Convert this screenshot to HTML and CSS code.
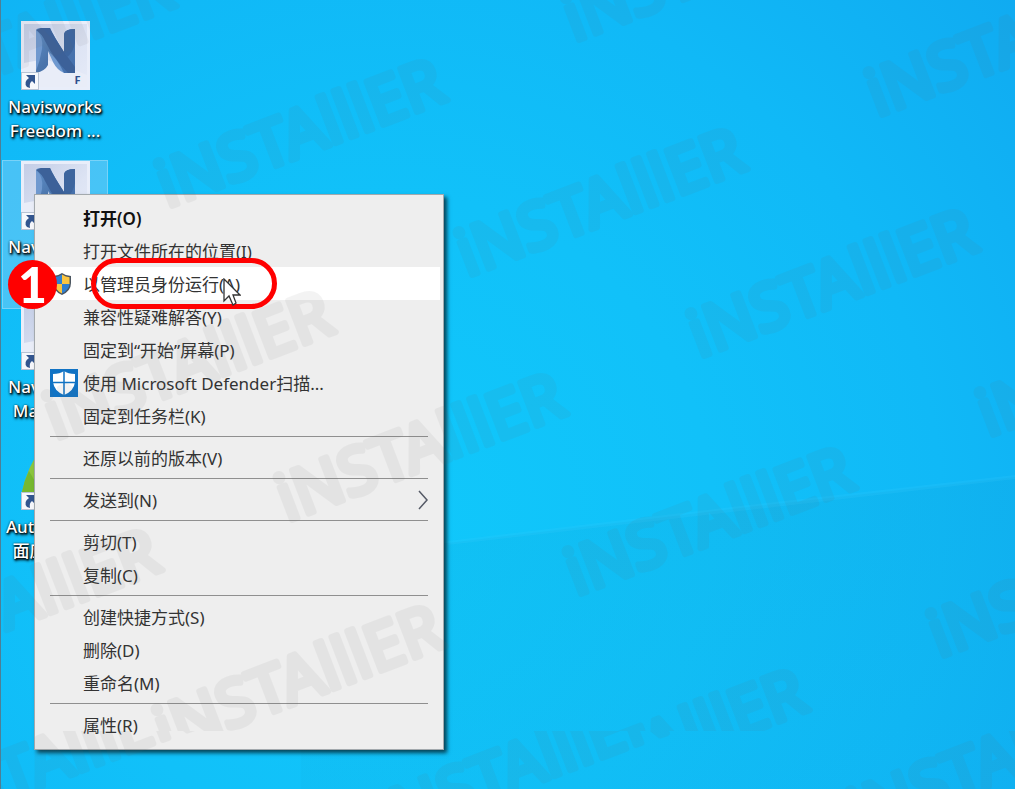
FILE: index.html
```html
<!DOCTYPE html>
<html lang="zh-CN">
<head>
    <meta charset="UTF-8">
    <meta name="viewport" content="width=device-width, initial-scale=1.0">
    <title>以管理员身份运行</title>
    <link rel="stylesheet" href="styles.css">
</head>
<body>
    <!-- 公用图形 -->
    <svg class="defs" width="0" height="0" aria-hidden="true">
        <defs>
            <linearGradient id="tile" x1="0" y1="0" x2="1" y2="1">
                <stop offset="0" stop-color="#c3cde6"/>
                <stop offset=".6" stop-color="#dde4f4"/>
                <stop offset="1" stop-color="#e6ebf8"/>
            </linearGradient>
            <linearGradient id="blue" x1="0" y1="0" x2="1" y2="1">
                <stop offset="0" stop-color="#5f8fc8"/>
                <stop offset=".5" stop-color="#4a74ab"/>
                <stop offset="1" stop-color="#4470ae"/>
            </linearGradient>
            <symbol id="navis" viewBox="0 0 69 69">
                <rect width="69" height="69" fill="#e9eefa"/>
                <rect x="3" y="3" width="63" height="63" fill="url(#tile)"/>
                <path d="M3 42L24 38 66 54V66H3Z" fill="#e9edf8"/>
                <path d="M15 9Q16 7 20 7H29Q32 14 43 31V13Q44 8 54 8V52H43Q36 46 27 30V44Q24 50 15 52Z" fill="url(#blue)"/>
                <path d="M20 7H29Q32 14 43 31L54 46V52H47Q33 38 24 20Q21 13 15 9Z" fill="#3c6199"/>
                <path d="M15 9Q23 16 21 28Q19 40 15 50Z" fill="#7099cf"/>
                <path d="M43 31V13Q44 8 54 8V22Q52 32 46 36Z" fill="#3d659e"/>
                <path d="M27 30Q36 37 43 52Q36 49 32 41Z" fill="#6f99cf"/>
            </symbol>
            <symbol id="shortcut" viewBox="0 0 18 18">
                <rect x=".5" y=".5" width="17" height="17" fill="#f6f8fc" stroke="#b8c3d4"/>
                <path d="M5 3H14V12L11 9Q8 11 9 16L6 15Q2 10 8 6Z" fill="#32558f"/>
            </symbol>
        </defs>
    </svg>

    <main class="desktop">
        <!-- 壁纸上的光线 -->
        <svg class="wallpaper" viewBox="0 0 1015 789" preserveAspectRatio="none" aria-hidden="true">
            <defs>
                <linearGradient id="shade" x1="0" y1="0" x2="0" y2="1">
                    <stop offset="0" stop-color="#1090c0" stop-opacity=".12"/>
                    <stop offset="1" stop-color="#1090c0" stop-opacity=".06"/>
                </linearGradient>
            </defs>
            <path d="M300 552L447 543 740 508 1015 477V789H300Z" fill="url(#shade)"/>
            <path d="M447 541L740 506 1015 475V479L740 511 447 545Z" fill="#40d0ff" fill-opacity=".16"/>
        </svg>

        <div class="icons">
            <a class="shortcut" href="#">
                <span class="picture">
                    <svg width="69" height="69"><use href="#navis"/></svg>
                    <svg class="arrow" width="18" height="18"><use href="#shortcut"/></svg>
                    <span class="letter">F</span>
                </span>
                <span class="name">Navisworks<br>Freedom ...</span>
            </a>
            <a class="shortcut selected" href="#">
                <span class="picture">
                    <svg width="69" height="69"><use href="#navis"/></svg>
                    <svg class="arrow" width="18" height="18"><use href="#shortcut"/></svg>
                </span>
                <span class="name">Navisworks</span>
            </a>
            <a class="shortcut" href="#">
                <span class="picture">
                    <svg width="69" height="69"><use href="#navis"/></svg>
                    <svg class="arrow" width="18" height="18"><use href="#shortcut"/></svg>
                </span>
                <span class="name">Navisworks<br>Manage ...</span>
            </a>
            <a class="shortcut" href="#">
                <span class="picture">
                    <svg width="69" height="69" viewBox="0 0 69 69">
                        <path d="M1 51Q6 26 22 4H44L68 51Z" fill="#8cc63f"/>
                        <path d="M1 51Q3 40 8 30L20 51Z" fill="#76b82f"/>
                    </svg>
                    <svg class="arrow" width="18" height="18"><use href="#shortcut"/></svg>
                </span>
                <span class="name">Autodesk 桌<br>面应用程序</span>
            </a>
        </div>

        <!-- 右键菜单 -->
        <menu class="context-menu">
            <li><button class="item default">打开(O)</button></li>
            <li><button class="item">打开文件所在的位置(I)</button></li>
            <li>
                <button class="item active">
                    <svg class="uac" width="18" height="22" viewBox="0 0 18 22" aria-hidden="true">
                        <path d="M9 0Q13 3 18 3V10Q18 18 9 22Q0 18 0 10V3Q5 3 9 0Z" fill="#4b5560"/>
                        <path d="M9 1.500Q5 4 1.500 4.200V11H9Z" fill="#2f7fd0"/>
                        <path d="M9 1.500Q13 4 16.500 4.200V11H9Z" fill="#fbc540"/>
                        <path d="M1.500 11Q2 17 9 20.500V11Z" fill="#fbc540"/>
                        <path d="M16.500 11Q16 17 9 20.500V11Z" fill="#2f7fd0"/>
                    </svg>
                    以管理员身份运行(A)
                </button>
            </li>
            <li><button class="item">兼容性疑难解答(Y)</button></li>
            <li><button class="item">固定到“开始”屏幕(P)</button></li>
            <li>
                <button class="item">
                    <svg class="defender" width="28" height="28" viewBox="0 0 28 28" aria-hidden="true">
                        <rect width="28" height="28" fill="#1173c4"/>
                        <path d="M14 2Q18 5 25 5V13Q24 22 14 26Q4 22 3 13V5Q10 5 14 2Z" fill="#fff"/>
                        <path d="M14 2V26M3 13.500H25" stroke="#1173c4" stroke-width="1.500"/>
                    </svg>
                    使用 Microsoft Defender扫描...
                </button>
            </li>
            <li><button class="item">固定到任务栏(K)</button></li>
            <li class="separator" role="separator"></li>
            <li><button class="item">还原以前的版本(V)</button></li>
            <li class="separator" role="separator"></li>
            <li>
                <button class="item">
                    发送到(N)
                    <svg class="more" width="12" height="20" viewBox="0 0 12 20" aria-hidden="true">
                        <path d="M2 1L10 10L2 19" fill="none" stroke="#555a66" stroke-width="1.500"/>
                    </svg>
                </button>
            </li>
            <li class="separator" role="separator"></li>
            <li><button class="item">剪切(T)</button></li>
            <li><button class="item">复制(C)</button></li>
            <li class="separator" role="separator"></li>
            <li><button class="item">创建快捷方式(S)</button></li>
            <li><button class="item">删除(D)</button></li>
            <li><button class="item">重命名(M)</button></li>
            <li class="separator" role="separator"></li>
            <li><button class="item">属性(R)</button></li>
        </menu>

        <!-- 水印 -->
        <svg class="watermark" aria-hidden="true">
            <defs>
                <clipPath id="upper"><rect width="100%" height="731"/></clipPath>
                <clipPath id="lower"><rect y="731" width="100%" height="100%"/></clipPath>
            </defs>
            <g clip-path="url(#upper)">
                <text transform="translate(-105 114) rotate(-21)">iNSTAlllER</text>
                <text transform="translate(573 42) rotate(-21)">iNSTAlllER</text>
                <text transform="translate(166 208) rotate(-21)">iNSTAlllER</text>
                <text transform="translate(466 277) rotate(-21)">iNSTAlllER</text>
                <text transform="translate(698 358) rotate(-21)">iNSTAlllER</text>
                <text transform="translate(876 117) rotate(-21)">iNSTAlllER</text>
                <text transform="translate(54 440) rotate(-21)">iNSTAlllER</text>
                <text transform="translate(286 522) rotate(-21)">iNSTAlllER</text>
                <text transform="translate(575 596) rotate(-21)">iNSTAlllER</text>
                <text transform="translate(938 658) rotate(-21)">iNSTAlllER</text>
                <text transform="translate(987 437) rotate(-21)">iNSTAlllER</text>
                <text transform="translate(-119 678) rotate(-21)">iNSTAlllER</text>
                <text transform="translate(164 754) rotate(-21)">iNSTAlllER</text>
                <text transform="translate(528 818) rotate(-21)">iNSTAlllER</text>
            </g>
            <g clip-path="url(#lower)">
                <text transform="translate(-88 836) rotate(-21)">iNSTAlllER</text>
                <text transform="translate(385 841) rotate(-21)">iNSTAlllER</text>
                <text transform="translate(858 836) rotate(-21)">iNSTAlllER</text>
            </g>
        </svg>

        <!-- 步骤标注 -->
        <div class="highlight"></div>
        <span class="step">1</span>
        <svg class="cursor" width="18" height="28" viewBox="0 0 18 28" aria-hidden="true">
            <path d="M1 1V23L6 18L10 27L13 25L10 17H17Z" fill="#fff" stroke="#333" stroke-width="1.300"/>
        </svg>
    </main>
</body>
</html>
```
FILE: styles.css
```css
* {
    box-sizing: border-box;
}
body {
    margin: 0;
    font-family: "Noto Sans", "Noto Sans CJK SC", sans-serif;
    font-size: 17px;
}
.defs {
    position: absolute;
}
.desktop {
    position: relative;
    min-height: 100vh;
    padding: 20px 0 0 1px;
    overflow: hidden;
    background: radial-gradient(circle at 38% 66%, #10c8fb 0%, #11c1f9 40%, #10b9f7 68%, #10abf1 100%);
    border-left: 1px solid #4d7f96;
}
.wallpaper {
    position: absolute;
    top: 0;
    left: 0;
    width: 100%;
    height: 100%;
}

/* 桌面图标 */
.icons {
    position: relative;
    display: flex;
    flex-direction: column;
    width: 106px;
}
.shortcut {
    display: flex;
    flex-direction: column;
    align-items: center;
    height: 140px;
    padding-top: 1px;
    color: white;
    text-align: center;
    text-decoration: none;
}
.shortcut.selected {
    height: 149px;
    margin-bottom: -9px;
    background-color: rgba(140, 205, 245, 0.45);
    box-shadow: inset 0 0 0 1px rgba(170, 225, 250, 0.5);
}
.picture {
    position: relative;
    width: 69px;
    height: 69px;
}
.picture svg {
    display: block;
}
.picture .arrow {
    position: absolute;
    left: 0;
    bottom: 0;
}
.letter {
    position: absolute;
    right: 9px;
    bottom: 4px;
    color: #2f4f8c;
    font-size: 11px;
    font-weight: bold;
    line-height: 12px;
}
.name {
    margin-top: 5px;
    font-weight: 500;
    line-height: 24px;
    white-space: nowrap;
    text-shadow: 1px 1px 2px #000, 1px 2px 3px #000, 0 0 2px rgba(0, 0, 0, 0.6);
}

/* 右键菜单 */
.context-menu {
    position: absolute;
    top: 194px;
    left: 33px;
    width: 410px;
    margin: 0;
    padding: 6px 3px 8px;
    list-style: none;
    background-color: #eee;
    border: 1px solid #a3a9ad;
    box-shadow: 3px 3px 4px rgba(0, 0, 0, 0.65);
}
.item {
    position: relative;
    display: flex;
    align-items: center;
    width: 100%;
    height: 33px;
    padding: 0 0 0 45px;
    color: #333;
    font: inherit;
    text-align: left;
    background: none;
    border: 0;
}
.item.default {
    color: #111;
    font-weight: 600;
}
.item.active {
    background-color: white;
}
.separator {
    height: 9px;
    padding: 4px 12px;
}
.separator::before {
    content: "";
    display: block;
    height: 1px;
    background-color: #8f8f8f;
}
.uac {
    position: absolute;
    left: 15px;
}
.defender {
    position: absolute;
    left: 12px;
}
.more {
    position: absolute;
    right: 11px;
}

/* 水印 */
.watermark {
    position: absolute;
    top: 0;
    left: 0;
    width: 100%;
    height: 100%;
    pointer-events: none;
    opacity: 0.07;
}
.watermark text {
    fill: #666;
    stroke: #666;
    stroke-width: 6px;
    stroke-linejoin: round;
    font-family: "Noto Sans", sans-serif;
    font-size: 65px;
}

/* 步骤标注 */
.highlight {
    position: absolute;
    top: 258px;
    left: 90px;
    width: 186px;
    height: 51px;
    border: 5px solid #f00;
    border-radius: 26px;
}
.step {
    position: absolute;
    top: 260px;
    left: 7px;
    width: 49px;
    height: 49px;
    color: white;
    font-family: Lato, sans-serif;
    font-size: 50px;
    font-weight: 900;
    line-height: 49px;
    text-align: center;
    background-color: #f00;
    border-radius: 50%;
}
.cursor {
    position: absolute;
    top: 278px;
    left: 222px;
}
```
